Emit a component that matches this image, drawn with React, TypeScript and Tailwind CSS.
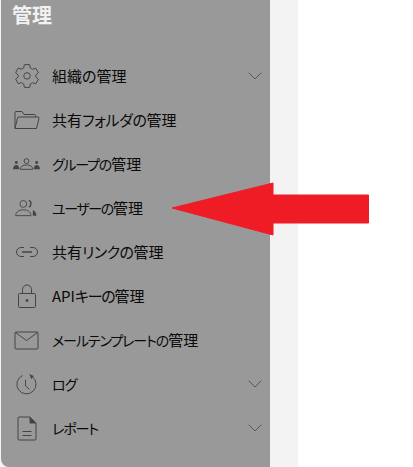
import React from 'react';
import { ChevronDown } from 'lucide-react';

const stroke = '#444444';

const GearIcon = () => (
  <svg width="26" height="26" viewBox="0 0 24 24" fill="none" stroke={stroke} strokeWidth="0.9" strokeLinejoin="round">
    <path d="M9.6 1.5h4.8l.7 3.2 1.9 1.1 3.1-1 2.4 4.2-2.4 2.1v1.8l2.4 2.1-2.4 4.2-3.1-1-1.9 1.1-.7 3.2H9.6l-.7-3.2L7 18.100l-3.100 1-2.400-4.200 2.400-2.100V11L1.500 8.900 3.900 4.700l3.100 1 1.900-1.100z" />
    <circle cx="12" cy="11.900" r="3" />
  </svg>
);

const FolderIcon = () => (
  <svg width="27" height="20" viewBox="0 0 26 20" fill="none" stroke={stroke} strokeWidth="1" strokeLinejoin="round">
    <path d="M1.500 18.500V2.500a1 1 0 0 1 1-1h6l2 3h10.500a1 1 0 0 1 1 1V7" />
    <path d="M1.500 18.500 4 8a1 1 0 0 1 1-1h19.500a1 1 0 0 1 1 1.200L23 18.500z" />
  </svg>
);

const GroupIcon = () => (
  <svg width="29" height="12" viewBox="0 0 30 12" fill="none">
    <circle cx="15" cy="3" r="2.500" stroke={stroke} strokeWidth="1" />
    <path d="M8.500 11.500c0-3 3-4.500 6.500-4.500s6.500 1.500 6.500 4.500z" stroke={stroke} strokeWidth="1" />
    <circle cx="4.500" cy="4.500" r="1.500" fill={stroke} />
    <path d="M1 11.500c0-2.500 1.500-4.500 3.500-4.500s3 2 3 4.500z" fill={stroke} />
    <circle cx="25.500" cy="4.500" r="1.500" fill={stroke} />
    <path d="M22.500 11.500c0-2.500 1-4.500 3-4.500s3.500 2 3.500 4.500z" fill={stroke} />
  </svg>
);

const UserIcon = () => (
  <svg width="25" height="18" viewBox="0 0 26 20" fill="none">
    <circle cx="9.500" cy="5.500" r="3.800" stroke={stroke} strokeWidth="1" />
    <path d="M1 18.500c0-4 3.500-6.500 8.500-6.500s8.500 2.500 8.500 6.500z" stroke={stroke} strokeWidth="1" />
    <path d="M15.500 1.500c3 .5 3.500 6 0 7.500" stroke={stroke} strokeWidth="1.500" />
    <path d="M20 12.500c2.500 1 4 3 4 6h-4z" fill={stroke} />
  </svg>
);

const LinkIcon = () => (
  <svg width="24" height="12" viewBox="0 0 24 12" fill="none" stroke={stroke} strokeWidth="1">
    <path d="M9 1.500H6a4.500 4.500 0 0 0 0 9h3" />
    <path d="M15 1.500h3a4.500 4.500 0 0 1 0 9h-3" />
    <path d="M7 6h10" strokeWidth="1.500" />
  </svg>
);

const LockIcon = () => (
  <svg width="20" height="25" viewBox="0 0 20 25" fill="none" stroke={stroke} strokeWidth="1">
    <path d="M5.500 9.500V5.500a4.500 4.500 0 0 1 9 0v4" />
    <rect x="1.500" y="9.500" width="17" height="14" rx="1" />
    <circle cx="10" cy="16.500" r="1" fill={stroke} />
  </svg>
);

const MailIcon = () => (
  <svg width="25" height="19" viewBox="0 0 25 19" fill="none" stroke={stroke} strokeWidth="1">
    <rect x="1" y="1" width="23" height="17" rx="1" />
    <path d="M1.500 1.500 12.500 9.500l11-8" />
  </svg>
);

const ClockIcon = () => (
  <svg width="23" height="23" viewBox="0 0 24 24" fill="none" stroke={stroke} strokeWidth="1">
    <path d="M17.500 3.500a10 10 0 1 1-9.500-.900" />
    <path d="M11 7v6.500l4 3.500" />
    <path d="M15 1l4.500 2-2.500 3.500z" fill={stroke} stroke="none" />
  </svg>
);

const ReportIcon = () => (
  <svg width="20" height="25" viewBox="0 0 20 25" fill="none" stroke={stroke} strokeWidth="1">
    <path d="M13 1H2a1 1 0 0 0-1 1v21a1 1 0 0 0 1 1h16a1 1 0 0 0 1-1V7z" />
    <path d="M13 1l6 6h-6z" fill={stroke} />
    <path d="M5.500 15.500h9M5.500 19.500h9" />
  </svg>
);

// kana in the menu labels is set narrower than the kanji, so it gets its own span
const items = [
  { head: '組織', kana: 'の', kanaClass: '', tail: '管理', icon: <GearIcon />, arrow: true },
  { head: '共有', kana: 'フォルダの', kanaClass: 'tracking-[-0.4px]', tail: '管理', icon: <FolderIcon /> },
  { head: '', kana: 'グループの', kanaClass: 'text-[14px] tracking-[-1.2px]', tail: '管理', icon: <GroupIcon /> },
  { head: '', kana: 'ユーザーの', kanaClass: 'text-[14px] tracking-[-1.4px]', tail: '管理', icon: <UserIcon /> },
  { head: '共有', kana: 'リンクの', kanaClass: 'tracking-[-0.5px]', tail: '管理', icon: <LinkIcon /> },
  { head: 'API', kana: 'キーの', kanaClass: 'tracking-[-1.3px]', tail: '管理', icon: <LockIcon /> },
  { head: '', kana: 'メールテンプレートの', kanaClass: 'text-[14px] tracking-[-1.1px]', tail: '管理', icon: <MailIcon /> },
  { head: '', kana: 'ログ', kanaClass: 'text-[14px] tracking-[-1px]', tail: '', icon: <ClockIcon />, arrow: true },
  { head: '', kana: 'レポート', kanaClass: 'text-[14px] tracking-[-1.100px]', tail: '', icon: <ReportIcon />, arrow: true },
];

export default function App() {
  return (
    <div className="relative flex h-[467px] w-[413px] overflow-hidden bg-white font-['Noto_Sans_CJK_JP',sans-serif]">
      <div className="w-[298px] bg-[#f3f3f3] pl-px">
        <aside className="h-[467px] w-[269px] rounded-bl-lg bg-[#999999]">
          <h1 className="pl-[11px] pt-[1px] text-[20px] font-bold leading-[28px] text-[#f2f2f2]">管理</h1>
          <ul className="mt-[25px]">
            {items.map((item) => (
              <li key={item.head + item.kana} className="flex h-11 items-center">
                <div className="flex w-[51px] shrink-0 justify-center">{item.icon}</div>
                <span className="flex-1 text-[15px] text-[#0a0a0a] [font-feature-settings:'palt']">
                  {item.head}
                  <span className={item.kanaClass}>{item.kana}</span>
                  {item.tail}
                </span>
                {item.arrow && <ChevronDown className="mr-[3px] h-6 w-6 text-[#4f4f4f]" strokeWidth={0.9} />}
              </li>
            ))}
          </ul>
        </aside>
      </div>
      {/* callout arrow lying over the menu */}
      <svg className="absolute left-[170px] top-[181px]" width="202" height="56" viewBox="0 0 202 56">
        <path d="M2 27 103 2v12h95.500v28h-95.500v12z" fill="#ef1c25" stroke="#ef1c25" strokeWidth="1" strokeLinejoin="round" />
      </svg>
    </div>
  );
}
